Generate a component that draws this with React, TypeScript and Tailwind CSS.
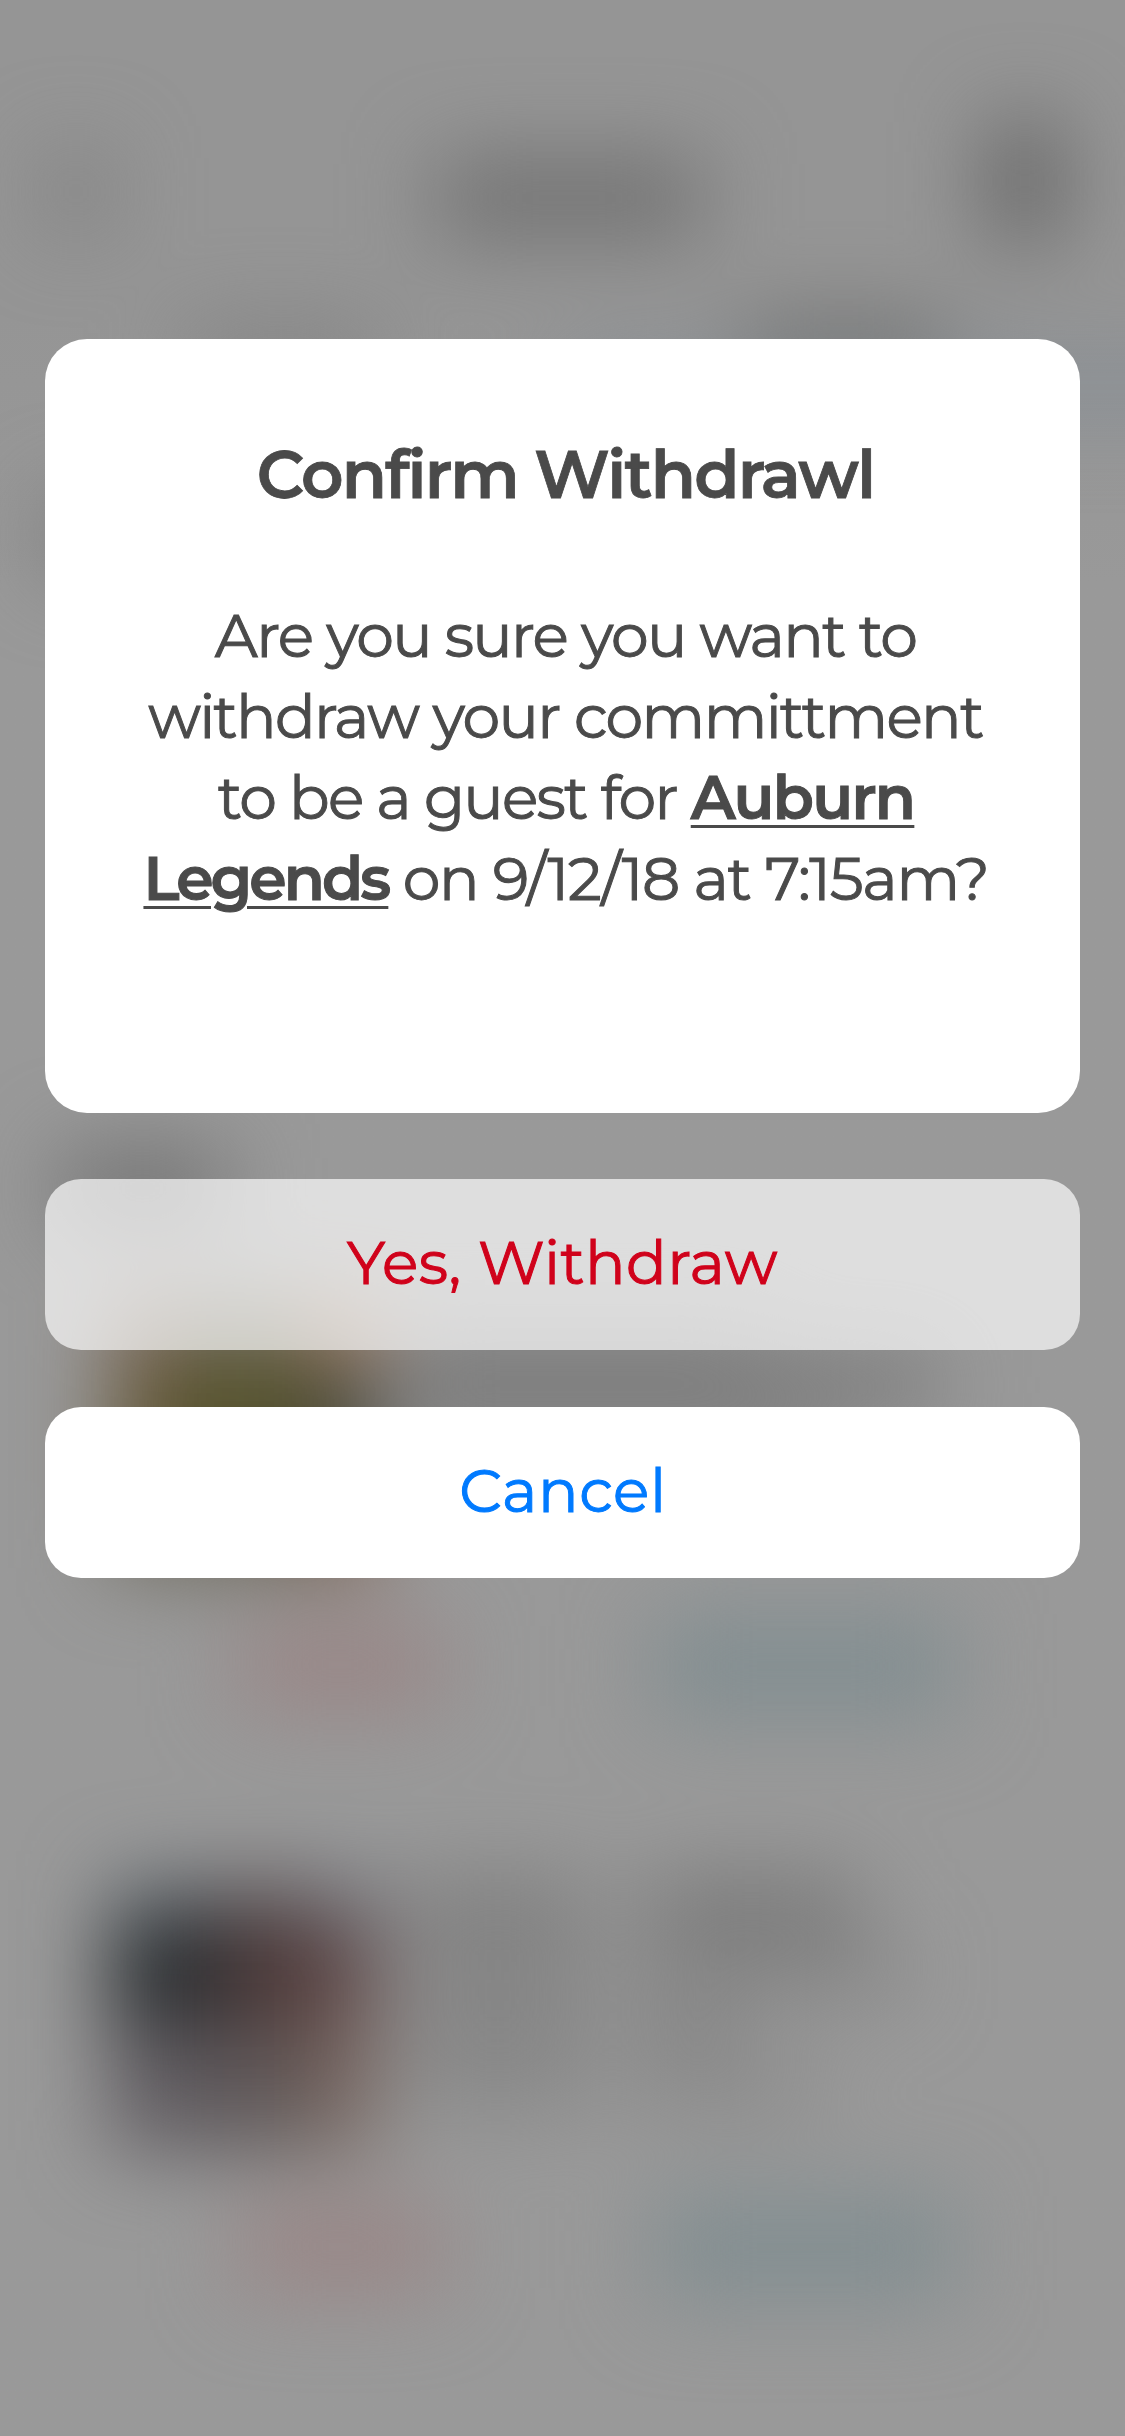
function BlurredHeader() {
  return (
    <div className="h-[390px] shrink-0">
      <div className="flex h-[310px] items-start justify-between pl-[46px] pr-[64px]">
        <div className="mt-[154px] h-[75px] w-[60px] bg-[#7f7f7f]" />
        <div className="ml-[42px] mt-[160px] h-[76px] w-[266px] bg-[#707070]" />
        <div className="mt-[122px] h-[118px] w-[72px] bg-[#646464]" />
      </div>
      <div className="grid h-[80px] grid-cols-2">
        <div className="flex justify-center pt-[20px]">
          <div className="h-[50px] w-[190px] bg-[#808080]" />
        </div>
        <div className="flex flex-col items-center pt-[14px]">
          <div className="h-[54px] w-[200px] bg-[#696967]" />
        </div>
      </div>
    </div>
  );
}

function BlurredActions() {
  return (
    <div className="flex items-center pl-[240px] pt-[46px]">
      <div className="h-[84px] w-[200px] bg-[#998585]" />
      <div className="ml-[214px] h-[104px] w-[300px] bg-[#828e91]" />
    </div>
  );
}

function BlurredLines() {
  return (
    <div className="flex flex-col gap-[14px] pl-[26px]">
      <div className="flex gap-[54px]">
        <div className="h-[56px] w-[190px] bg-[#7c7c7c]" />
        <div className="h-[56px] w-[210px] bg-[#747474]" />
      </div>
      <div className="flex gap-[40px]">
        <div className="h-[46px] w-[190px] bg-[#818181]" />
        <div className="h-[46px] w-[270px] bg-[#828282]" />
      </div>
      <div className="flex gap-[40px]">
        <div className="h-[44px] w-[190px] bg-[#808080]" />
        <div className="h-[44px] w-[110px] bg-[#828282]" />
      </div>
      <div className="flex gap-[40px]">
        <div className="h-[42px] w-[190px] bg-[#868686]" />
        <div className="h-[42px] w-[190px] bg-[#888888]" />
      </div>
    </div>
  );
}

function Backdrop() {
  return (
    <div className="absolute inset-0 overflow-hidden bg-linear-to-b from-[#959595] from-[13%] to-[#999999] to-[24%]">
      <div className="flex h-full flex-col blur-[43px]">
        <BlurredHeader />
        <div className="-mr-40 -mt-[26px] ml-[563px] h-[46px] shrink-0 bg-[#858d95]" />
        <div className="ml-[45px] mt-[90px] h-[70px] w-[150px] shrink-0 bg-[#7a7a7a]" />
        <div className="ml-[60px] mt-[582px] h-[72px] w-[165px] shrink-0 bg-[#707070]" />

        <div className="mt-[74px] flex h-[582px] shrink-0 flex-col">
          <div className="flex pl-[111px]">
            <div className="grid h-[270px] w-[266px] grid-cols-[66px_1fr_66px] grid-rows-[70px_110px_90px]">
              <div className="bg-[#7d6756]" />
              <div className="bg-[#6c6855]" />
              <div className="bg-[#a57a5c]" />
              <div className="bg-[#655637]" />
              <div className="bg-[#535128]" />
              <div className="bg-[#40423a]" />
              <div className="bg-[#6c675a]" />
              <div className="bg-[#6a6557]" />
              <div className="bg-[#805e4c]" />
            </div>
            <div className="pt-[14px]">
              <div className="ml-[20px] h-[44px] w-[370px] bg-[#8a8a8a]" />
              <div className="ml-[20px] h-[58px] w-[540px] bg-[#777777]" />
              <div className="ml-[20px] mt-[6px] h-[44px] w-[420px] bg-[#868686]" />
            </div>
          </div>
          <BlurredActions />
        </div>

        <div className="flex h-[556px] shrink-0 flex-col">
          <div className="flex pl-[111px]">
            <div className="grid h-[270px] w-[266px] grid-cols-[110px_84px_72px] grid-rows-[44px_96px_130px]">
              <div className="bg-[#60676e]" />
              <div className="bg-[#5f585b]" />
              <div className="bg-[#6c7079]" />
              <div className="bg-[#22272a]" />
              <div className="bg-[#4b3534]" />
              <div className="bg-[#5e4646]" />
              <div className="bg-[#5e5a5f]" />
              <div className="bg-[#5e5656]" />
              <div className="bg-[#77645e]" />
            </div>
            <BlurredLines />
          </div>
          <BlurredActions />
        </div>
      </div>
    </div>
  );
}

export default function App() {
  return (
    <div className="relative h-[2436px] w-[1125px] overflow-hidden font-['Montserrat','Inter',sans-serif]">
      <Backdrop />
      <div className="relative flex flex-col px-[45px] pt-[339px]">
        <section className="h-[774px] rounded-[42px] bg-white pl-[6px] pt-[96px] text-center text-[#4a4a4a]">
          <h1 className="text-[66px] leading-[80px] font-semibold tracking-[-1.85px] [-webkit-text-stroke:0.8px_#4a4a4a]">Confirm Withdrawl</h1>
          <p className="mt-[80px] text-[60px] leading-[81px] font-normal whitespace-nowrap [-webkit-text-stroke:1px_#4a4a4a]">
            <span className="block tracking-[-1.7px]">Are you sure you want to</span>
            <span className="block tracking-[-1.6px]">withdraw your committment</span>
            <span className="block pl-[1px] tracking-[-1.75px]">
              to be a guest for{" "}
              <b className="font-semibold tracking-[-1.6px] underline decoration-[3px] underline-offset-[6px]">Auburn</b>
            </span>
            <span className="block pl-[1px] tracking-[-1.3px]">
              <b className="font-semibold tracking-[-2.9px] underline decoration-[3px] underline-offset-[6px]">Legends</b>
              {" "}on 9/12/18 at 7:15am?
            </span>
          </p>
        </section>
        <button className="mt-[66px] flex h-[171px] items-center justify-center rounded-[36px] bg-white/68 pb-[4px] text-[60px] leading-[81px] tracking-[0.5px] text-[#d0021b] [-webkit-text-stroke:1px_#d0021b]">
          Yes, Withdraw
        </button>
        <button className="mt-[57px] flex h-[171px] items-center justify-center rounded-[36px] bg-white pb-[4px] pl-[1px] text-[60px] leading-[81px] tracking-[0.6px] text-[#007aff] [-webkit-text-stroke:1px_#007aff]">
          Cancel
        </button>
      </div>
    </div>
  );
}
